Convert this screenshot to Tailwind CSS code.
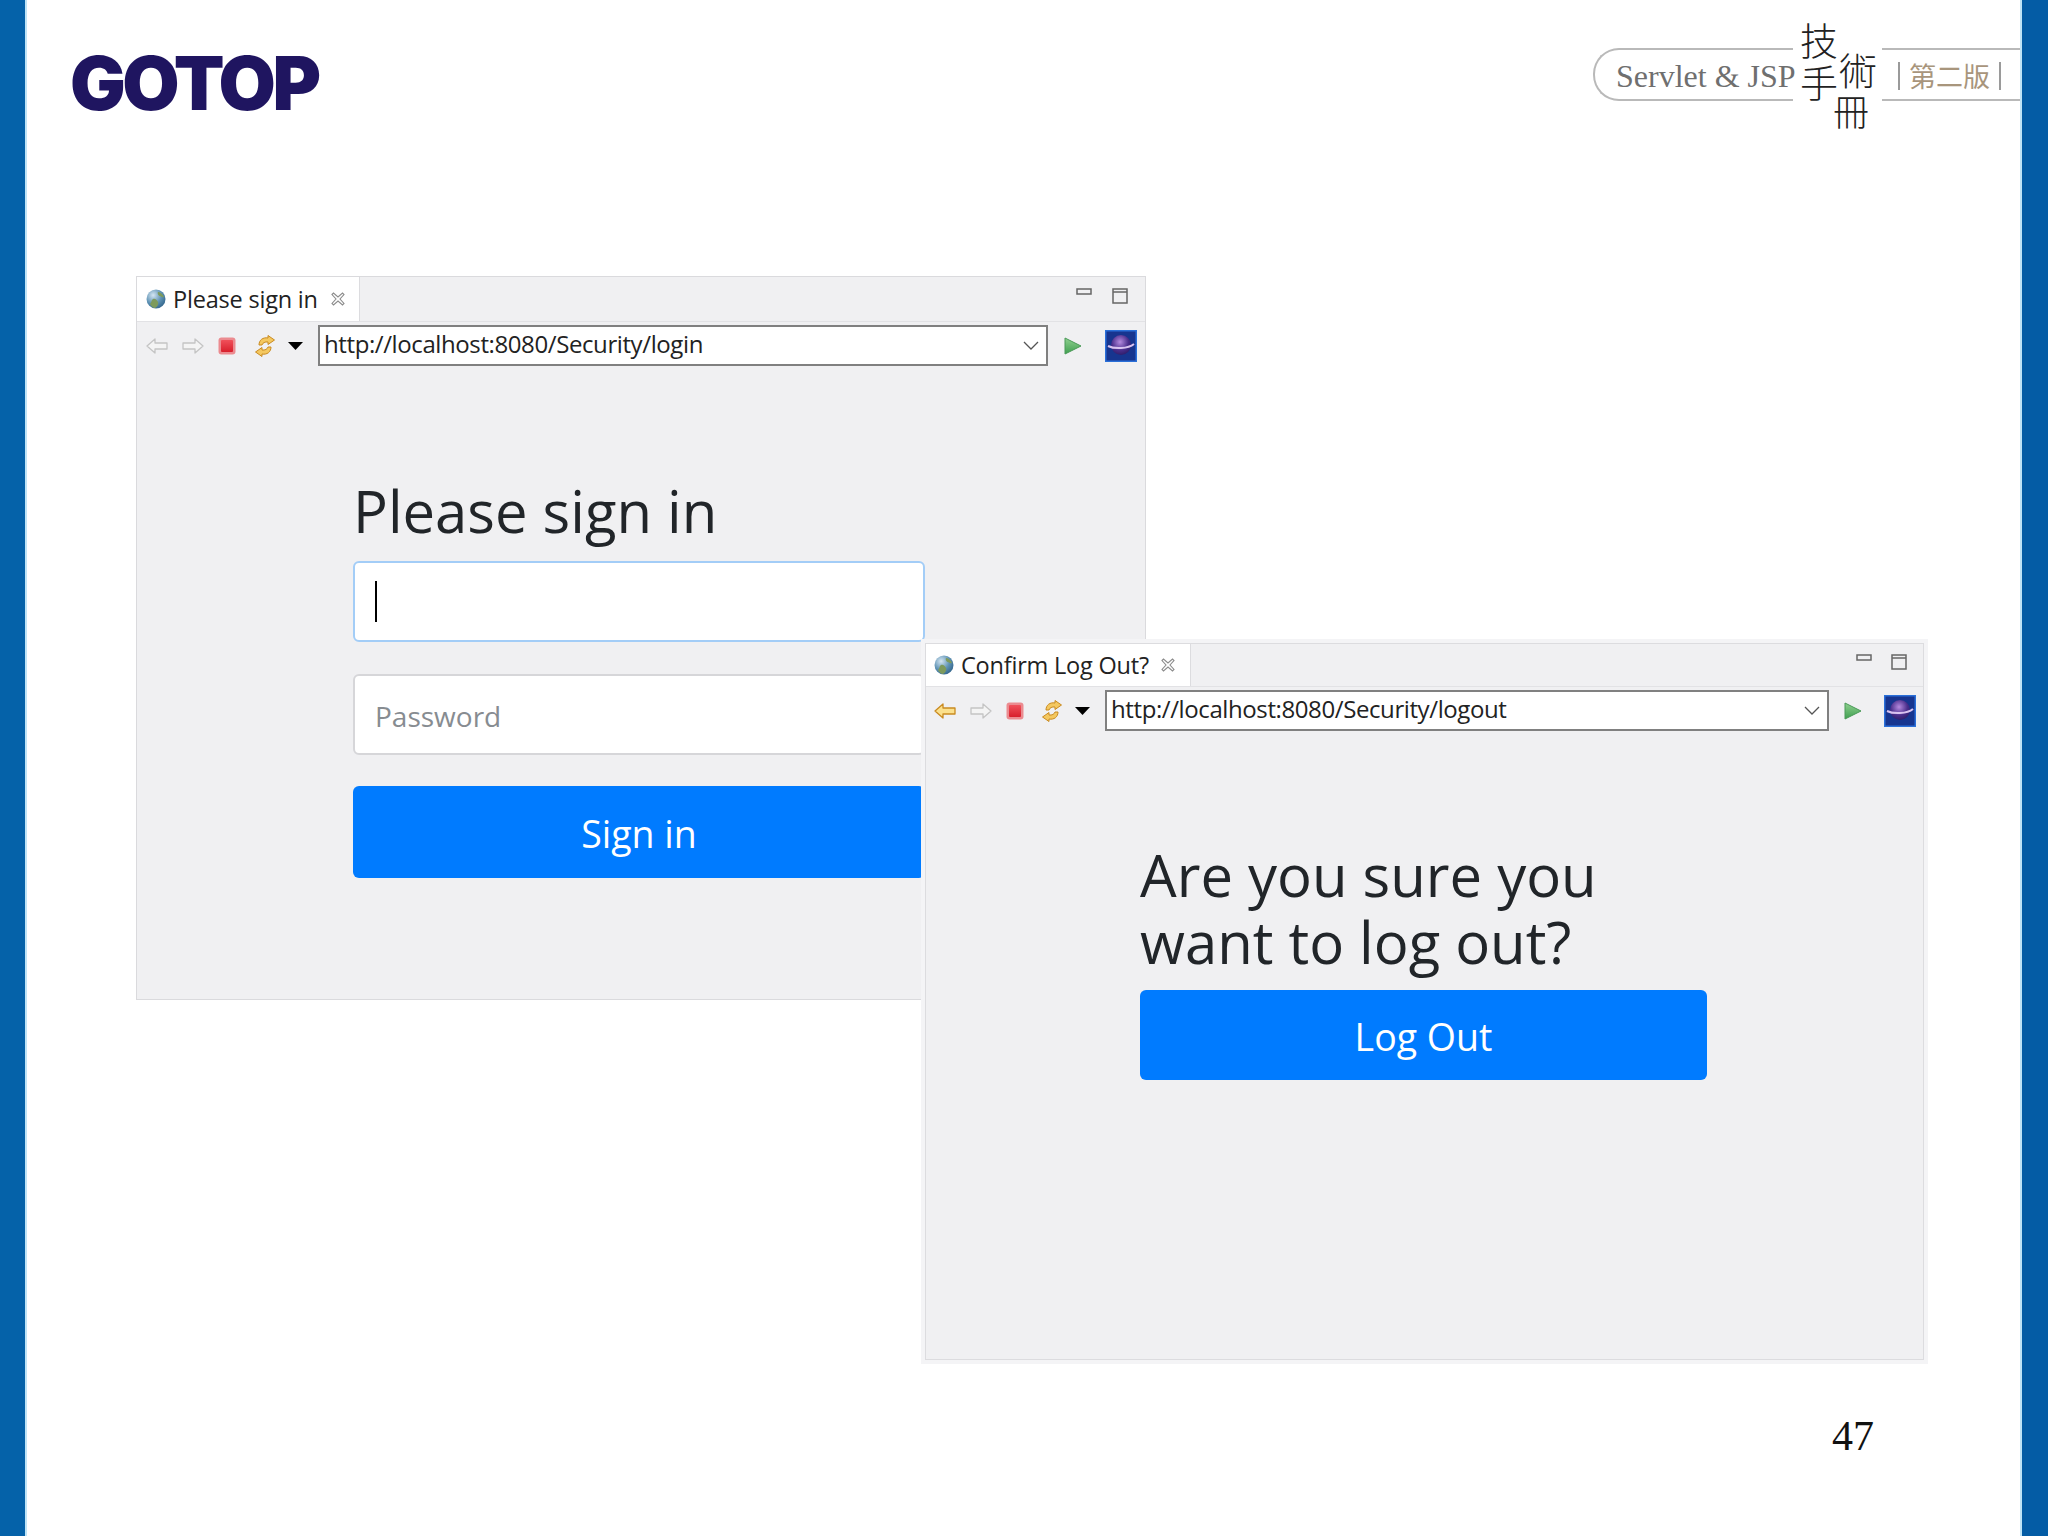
<!DOCTYPE html>
<html lang="en">
<head>
  <meta charset="UTF-8" />
  <title>Servlet &amp; JSP slide 47</title>
  <script src="https://cdn.jsdelivr.net/npm/@tailwindcss/browser@4"></script>
</head>
<body class="bg-white font-['Open_Sans',sans-serif]">
  <!-- shared toolbar icons -->
  <svg class="absolute w-0 h-0">
    <defs>
      <radialGradient id="globeFill" cx="35%" cy="30%" r="80%">
        <stop offset="0" stop-color="#d5e6f2"/><stop offset=".55" stop-color="#5f93b5"/><stop offset="1" stop-color="#2d5f86"/>
      </radialGradient>
      <linearGradient id="stopFill" x1="0" y1="0" x2="0" y2="1">
        <stop offset="0" stop-color="#f0505a"/><stop offset="1" stop-color="#d81f2c"/>
      </linearGradient>
      <linearGradient id="playFill" x1="0" y1="0" x2="0" y2="1">
        <stop offset="0" stop-color="#8fd08f"/><stop offset="1" stop-color="#3f9f50"/>
      </linearGradient>
      <radialGradient id="planetFill" cx="45%" cy="35%" r="70%">
        <stop offset="0" stop-color="#b48ade"/><stop offset=".6" stop-color="#4a2e8c"/><stop offset="1" stop-color="#2a1a66"/>
      </radialGradient>
    </defs>
    <symbol id="globe" viewBox="0 0 20 20">
      <circle cx="10" cy="10" r="9.5" fill="url(#globeFill)"/>
      <path d="M4 15c2-2 1-4 3-5s4 1 5 3-1 5-3 6c-2 0-4-2-5-4zM12 3c2 0 5 2 6 5-2 1-3-1-4-1s-3-2-2-4z" fill="#7d9a5c"/>
    </symbol>
    <symbol id="close" viewBox="0 0 16 16">
      <path d="M2 3.500 3.500 2 8 6l4.500-4L14 3.500 10 8l4 4.500-1.500 1.500L8 10l-4.500 4L2 12.500 6 8z" fill="#fff" stroke="#8c8c8c" stroke-width="1.100"/>
    </symbol>
    <symbol id="left" viewBox="0 0 22 16">
      <path d="M1 8 9 1v4h12v6H9v4z" stroke-width="1.300" stroke-linejoin="round"/>
    </symbol>
    <symbol id="right" viewBox="0 0 22 16">
      <path d="M21 8 13 1v4H1v6h12v4z" stroke-width="1.300" stroke-linejoin="round"/>
    </symbol>
    <symbol id="stop" viewBox="0 0 18 18">
      <rect x=".5" y=".5" width="17" height="17" rx="3" fill="#eb8b90"/>
      <rect x="3" y="3" width="12" height="12" rx="1" fill="url(#stopFill)"/>
    </symbol>
    <symbol id="sync" viewBox="0 0 22 22">
      <path d="M5 10C5 5 9 2 14 3V.5L20.500 5 14 9.500V7c-3-.5-5.500 1-6 3z" fill="#f4c860" stroke="#c98a20"/>
      <path d="M17 12c0 5-4 8-9 7v2.500L1.500 17 8 12.500V15c3 .5 5.500-1 6-3z" fill="#f4c860" stroke="#c98a20"/>
    </symbol>
    <symbol id="tri" viewBox="0 0 15 8"><path d="M0 0h15L7.500 8z" fill="#000"/></symbol>
    <symbol id="chev" viewBox="0 0 16 9"><path d="m1 1 7 7 7-7" fill="none" stroke="#555" stroke-width="1.300"/></symbol>
    <symbol id="play" viewBox="0 0 18 18"><path d="M1 1v16l16-8z" fill="url(#playFill)" stroke="#4a9a58"/></symbol>
    <symbol id="planet" viewBox="0 0 32 32">
      <rect width="32" height="32" fill="#2a6fd8"/>
      <rect x="1.500" y="1.500" width="29" height="29" fill="#17358f"/>
      <circle cx="16" cy="15" r="10" fill="url(#planetFill)"/>
      <path d="M3 16c6 3 20 3 26-2" fill="none" stroke="#d8c2f0" stroke-width="2"/>
    </symbol>
    <symbol id="min" viewBox="0 0 16 7"><rect x="1" y="1" width="14" height="5" fill="none" stroke="#666" stroke-width="1.500"/></symbol>
    <symbol id="max" viewBox="0 0 16 16"><path d="M1 1h14v14H1zM1 4h14" fill="none" stroke="#666" stroke-width="1.500"/></symbol>
  </svg>

  <div class="relative w-[2048px] h-[1536px] overflow-hidden flex">
    <div class="w-[27px] bg-[#0562a9] border-r-2 border-[#bfe4f7]"></div>

    <div class="flex-1">
      <header class="flex justify-between items-start">
        <div class="ml-[43px] mt-[45px] text-[#1f1560] text-[74px] leading-[76px] font-black tracking-[-3.500px] font-['Inter',sans-serif]">GOTOP</div>

        <div class="relative w-[427px] h-[130px]">
          <div class="absolute left-0 right-0 top-[48px] h-[53px] rounded-l-[26px] border-y-2 border-l-2 border-[#b9b9b9]"></div>
          <div class="absolute left-[200px] w-[89px] top-[40px] h-[70px] bg-white"></div>
          <span class="absolute left-[23px] top-[54px] text-[32px] leading-[44px] text-[#6f6f6f] font-['Liberation_Serif',serif]">Servlet &amp; JSP</span>
          <span class="absolute left-[207px] top-[20px] text-[38px] leading-none text-[#222] font-extralight font-['Noto_Sans_CJK_TC',sans-serif]">技</span>
          <span class="absolute left-[246px] top-[50px] text-[38px] leading-none text-[#222] font-extralight font-['Noto_Sans_CJK_TC',sans-serif]">術</span>
          <span class="absolute left-[207px] top-[62px] text-[38px] leading-none text-[#222] font-extralight font-['Noto_Sans_CJK_TC',sans-serif]">手</span>
          <span class="absolute left-[240px] top-[92px] text-[36px] leading-none text-[#222] font-extralight font-['Noto_Sans_CJK_TC',sans-serif]">冊</span>
          <div class="absolute left-[305px] top-[62px] h-[28px] flex items-center gap-[9px] text-[27px] text-[#a8957c] font-['Noto_Sans_CJK_TC',sans-serif]">
            <span class="w-[2px] h-[28px] bg-[#9a9a9a]"></span>
            <span class="leading-[28px]">第二版</span>
            <span class="w-[2px] h-[28px] bg-[#9a9a9a]"></span>
          </div>
        </div>
      </header>
    </div>

    <div class="w-[28px] bg-[#045ca5] border-l-2 border-[#bfe4f7]"></div>

    <!-- login window -->
    <section class="absolute left-[136px] top-[276px] w-[1010px] h-[724px] bg-[#f0f0f2] border border-[#dadadd]">
      <div class="flex h-[45px] border-b border-[#e2e2e5]">
        <div class="w-[223px] bg-white border-r border-[#dcdcdf] flex items-center">
          <svg class="w-[20px] h-[20px] ml-[9px]"><use href="#globe"/></svg>
          <span class="ml-[7px] text-[23.500px] leading-[24px] text-[#222] tracking-[-0.200px] whitespace-nowrap">Please sign in</span>
          <svg class="w-[16px] h-[16px] ml-[12px]"><use href="#close"/></svg>
        </div>
        <div class="flex-1 flex justify-end items-start pt-[11px]">
          <svg class="w-[16px] h-[7px] mr-[20px]"><use href="#min"/></svg>
          <svg class="w-[16px] h-[16px] mr-[17px]"><use href="#max"/></svg>
        </div>
      </div>
      <div class="flex items-center h-[44px] pt-[3px]">
        <svg class="w-[22px] h-[16px] ml-[9px] fill-[#f4f4f4] stroke-[#c4c4c4]"><use href="#left"/></svg>
        <svg class="w-[22px] h-[16px] ml-[14px] fill-[#f4f4f4] stroke-[#c4c4c4]"><use href="#right"/></svg>
        <svg class="w-[18px] h-[18px] ml-[14px]"><use href="#stop"/></svg>
        <svg class="w-[22px] h-[22px] ml-[18px]"><use href="#sync"/></svg>
        <svg class="w-[15px] h-[8px] ml-[12px]"><use href="#tri"/></svg>
        <div class="w-[730px] h-[41px] ml-[15px] bg-white border-2 border-[#808080] flex items-center justify-between pl-[4px] pr-[7px]">
          <span class="pb-[3px] text-[24px] leading-[30px] text-[#222] tracking-[-0.400px] whitespace-nowrap">http://localhost:8080/Security/login</span>
          <svg class="w-[16px] h-[9px]"><use href="#chev"/></svg>
        </div>
        <svg class="w-[18px] h-[18px] ml-[16px]"><use href="#play"/></svg>
        <svg class="w-[32px] h-[32px] ml-[23px]"><use href="#planet"/></svg>
      </div>
      <form class="pl-[216px] pt-[111px] w-[788px]">
        <h1 class="text-[58px] leading-[67px] text-[#212529] mb-[17px] whitespace-nowrap">Please sign in</h1>
        <div class="h-[81px] bg-white border-2 border-[#a3cdf7] rounded-[6px] flex items-center pl-[20px]">
          <span class="w-[2px] h-[41px] bg-black"></span>
        </div>
        <input class="mt-[32px] block w-full h-[81px] bg-white border-2 border-[#d6d6d9] rounded-[6px] pl-[20px] pt-[2px] text-[28px] placeholder:text-[#878c91]" placeholder="Password" />
        <button type="button" class="mt-[31px] block w-full h-[92px] pt-[4px] bg-[#007bff] rounded-[6px] text-white text-[37.500px]">Sign in</button>
      </form>
    </section>

    <!-- logout window -->
    <section class="absolute left-[921px] top-[639px] w-[1007px] h-[725px] bg-[#f0f0f2] border-4 border-[#f4f4f6] outline outline-1 -outline-offset-5 outline-[#dcdcdf]">
      <div class="flex h-[44px] border-b border-[#e2e2e5]">
        <div class="w-[266px] bg-white border-r border-[#dcdcdf] flex items-center">
          <svg class="w-[20px] h-[20px] ml-[9px]"><use href="#globe"/></svg>
          <span class="ml-[7px] text-[23.500px] leading-[24px] text-[#222] tracking-[-0.200px] whitespace-nowrap">Confirm Log Out?</span>
          <svg class="w-[16px] h-[16px] ml-[11px]"><use href="#close"/></svg>
        </div>
        <div class="flex-1 flex justify-end items-start pt-[11px]">
          <svg class="w-[16px] h-[7px] mr-[19px]"><use href="#min"/></svg>
          <svg class="w-[16px] h-[16px] mr-[17px]"><use href="#max"/></svg>
        </div>
      </div>
      <div class="flex items-center h-[46px] pt-[1px]">
        <svg class="w-[22px] h-[16px] ml-[9px] fill-[#fbe08c] stroke-[#c98a20]"><use href="#left"/></svg>
        <svg class="w-[22px] h-[16px] ml-[14px] fill-[#f4f4f4] stroke-[#c4c4c4]"><use href="#right"/></svg>
        <svg class="w-[18px] h-[18px] ml-[14px]"><use href="#stop"/></svg>
        <svg class="w-[22px] h-[22px] ml-[17px]"><use href="#sync"/></svg>
        <svg class="w-[15px] h-[8px] ml-[12px]"><use href="#tri"/></svg>
        <div class="w-[724px] h-[41px] ml-[15px] bg-white border-2 border-[#808080] flex items-center justify-between pl-[4px] pr-[7px]">
          <span class="pb-[3px] text-[24px] leading-[30px] text-[#222] tracking-[-0.400px] whitespace-nowrap">http://localhost:8080/Security/logout</span>
          <svg class="w-[16px] h-[9px]"><use href="#chev"/></svg>
        </div>
        <svg class="w-[18px] h-[18px] ml-[15px]"><use href="#play"/></svg>
        <svg class="w-[32px] h-[32px] ml-[22px]"><use href="#planet"/></svg>
      </div>
      <div class="pl-[215px] pt-[108px] w-[782px]">
        <h1 class="text-[58px] leading-[67px] text-[#212529] mb-[15px]">Are you sure you want to log out?</h1>
        <button type="button" class="block w-full h-[90px] pt-[4px] bg-[#007bff] rounded-[6px] text-white text-[37.500px]">Log Out</button>
      </div>
    </section>

    <span class="absolute left-[1832px] top-[1411px] text-[42px] leading-[50px] text-[#111] font-['Liberation_Serif',serif]">47</span>
  </div>
</body>
</html>
